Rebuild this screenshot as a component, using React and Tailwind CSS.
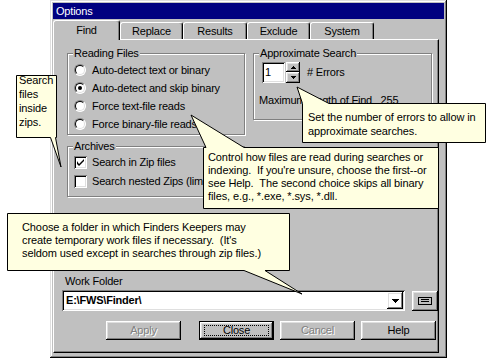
import React from 'react'

const raised = 'shadow-[inset_-1px_-1px_#000,inset_1px_1px_#fff,inset_-2px_-2px_#808080,inset_2px_2px_#dfdfdf]'
const sunken = 'shadow-[inset_1px_1px_#808080,inset_-1px_-1px_#fff,inset_2px_2px_#000,inset_-2px_-2px_#dfdfdf]'

const Radio = ({ checked, label }) => (
  <div className="flex items-center h-[18px] gap-[6px]">
    <span className="relative w-[12px] h-[12px] rounded-full bg-white border border-t-[#808080] border-l-[#808080] border-b-white border-r-white">
      <span className="absolute inset-0 rounded-full border border-t-black border-l-black border-b-[#dfdfdf] border-r-[#dfdfdf]" />
      {checked && <span className="absolute left-[3px] top-[3px] w-[4px] h-[4px] rounded-full bg-black" />}
    </span>
    <span>{label}</span>
  </div>
)

const Check = ({ checked, label, clip }) => (
  <div className="flex items-center h-[19px] gap-[5px]">
    <span className={`relative w-[13px] h-[13px] bg-white ${sunken}`}>
      {checked && (
        <svg className="absolute left-[3px] top-[3px]" width="7" height="7" viewBox="0 0 7 7">
          <path d="M0 2v3l2 2l5-5v-2l-5 5z" fill="#000" />
        </svg>
      )}
    </span>
    <span className={clip ? 'w-[112px] overflow-hidden whitespace-nowrap' : ''}>{label}</span>
  </div>
)

const Group = ({ label, className, children }) => (
  <div className={`relative border border-[#808080] shadow-[1px_1px_#fff,inset_1px_1px_#fff] ${className}`}>
    <span className="absolute -top-[8px] left-[5px] px-[1px] bg-[#c0c0c0] leading-[14px]">{label}</span>
    {children}
  </div>
)

const Tab = ({ label, active, w }) => (
  <div
    className={`relative flex items-center justify-center ${w} border-l border-t border-white rounded-tl-[3px] rounded-tr-[3px] border-r border-r-black shadow-[inset_-1px_0_#808080] ${
      active ? 'h-[20px] -mb-[1px] bg-[#c0c0c0] z-10' : 'h-[17px]'
    }`}
  >
    {label}
  </div>
)

const Btn = ({ label, disabled, def, className = '' }) => (
  <div className={`w-[75px] h-[19px] flex ${def ? 'border border-black' : ''} ${className}`}>
    <div className={`w-full h-full flex items-center justify-center ${raised}`}>
      {def ? (
        <span className="border border-dotted border-black w-[calc(100%-8px)] h-[calc(100%-6px)] flex items-center justify-center leading-[11px]">{label}</span>
      ) : (
        <span className={disabled ? 'text-[#808080] [text-shadow:1px_1px_#fff]' : ''}>{label}</span>
      )}
    </div>
  </div>
)

const Tip = ({ className, children }) => (
  <div className={`absolute text-black text-[11px] leading-[13px] tracking-[-0.1px] ${className}`}>{children}</div>
)

export default function App() {
  return (
    <div className="relative w-[498px] h-[359px] bg-white overflow-hidden font-['Liberation_Sans',Arial,sans-serif] text-[11px] tracking-[-0.2px] text-black">
      <div className="pl-[50px]">
        <div className="w-[397px] h-[358px] bg-[#c0c0c0] p-[3px] flex flex-col shadow-[inset_-1px_-1px_#000,inset_1px_1px_#dfdfdf,inset_-2px_-2px_#808080,inset_2px_2px_#fff]">
          <div className="h-[16px] bg-[#000080] text-white flex items-center pl-[3px]">Options</div>
          <div className="flex items-end h-[20px]">
            <Tab label="Find" active w="w-[67px]" />
            <Tab label="Replace" w="w-[63px]" />
            <Tab label="Results" w="w-[64px]" />
            <Tab label="Exclude" w="w-[63px]" />
            <Tab label="System" w="w-[64px]" />
          </div>
          <div className="relative flex-1 mr-[5px] mb-[2px] border-l border-t border-white border-r border-b border-r-black border-b-black shadow-[inset_-1px_-1px_#808080] pl-[13px] pt-[13px]">
            <div className="flex gap-[8px]">
              <div className="w-[178px] flex flex-col gap-[11px]">
                <Group label="Reading Files" className="h-[82px] pt-[7px] pl-[6px]">
                  <Radio label="Auto-detect text or binary" />
                  <Radio label="Auto-detect and skip binary" checked />
                  <Radio label="Force text-file reads" />
                  <Radio label="Force binary-file reads" />
                </Group>
                <Group label="Archives" className="h-[51px] pt-[6px] pl-[6px]">
                  <Check label="Search in Zip files" checked />
                  <Check label="Search nested Zips (limited)" clip />
                </Group>
              </div>
              <Group label="Approximate Search" className="w-[179px] h-[67px] pt-[8px] pl-[8px]">
                <div className="flex items-center gap-[7px]">
                  <div className="flex">
                    <div className={`w-[23px] h-[21px] bg-white ${sunken} pl-[3px] pt-[3px] leading-[14px]`}>1</div>
                    <div className="flex flex-col ml-[1px]">
                      <div className={`w-[14px] h-[10px] ${raised} flex items-center justify-center`}>
                        <svg width="5" height="3" viewBox="0 0 5 3"><path d="M2 0h1v1h1v1h1v1h-5v-1h1v-1h1z" fill="#000" /></svg>
                      </div>
                      <div className={`w-[14px] h-[11px] ${raised} flex items-center justify-center`}>
                        <svg width="5" height="3" viewBox="0 0 5 3"><path d="M0 0h5v1h-1v1h-1v1h-1v-1h-1v-1h-1z" fill="#000" /></svg>
                      </div>
                    </div>
                  </div>
                  <span># Errors</span>
                </div>
                <div className="mt-[9px] -ml-[3px]">Maximum length of Find&nbsp;&nbsp; 255</div>
              </Group>
            </div>
            <div className="mt-[77px] -ml-[2px] leading-[14px]">Work Folder</div>
            <div className="flex items-center mt-[2px] -ml-[5px] gap-[7px]">
              <div className={`w-[343px] h-[21px] bg-white ${sunken} flex items-center pl-[4px] pr-[2px]`}>
                <span className="flex-1 font-bold">E:\FWS\Finder\</span>
                <div className={`w-[16px] h-[17px] ${raised} flex items-center justify-center`}>
                  <svg width="7" height="4" viewBox="0 0 7 4"><path d="M0 0h7v1h-1v1h-1v1h-1v1h-1v-1h-1v-1h-1v-1h-1z" fill="#000" /></svg>
                </div>
              </div>
              <div className={`w-[26px] h-[20px] ${raised} flex items-center justify-center`}>
                <div className="w-[14px] h-[8px] border border-black bg-[#c0c0c0] flex flex-col justify-center gap-[1px] px-[2px]">
                  <div className="h-px bg-black" />
                  <div className="h-px bg-black" />
                </div>
              </div>
            </div>
            <div className="flex gap-[6px] mt-[10px] ml-[39px]">
              <Btn label="Apply" disabled className="mr-[12px]" />
              <Btn label="Close" def />
              <Btn label="Cancel" disabled />
              <Btn label="Help" />
            </div>
          </div>
        </div>
      </div>

      <svg className="absolute left-0 top-0" width="498" height="359" viewBox="0 0 498 359">
        <path d="M16.5 75.5H56.5V137.5H55.5L61 167L50.5 137.5H16.5Z" fill="#ffffe1" stroke="#000" />
        <path d="M302.5 103.5L297 87L329 103.5H485.5V142.5H302.5Z" fill="#ffffe1" stroke="#000" />
        <path d="M203.5 147.5H206L191 115L244 147.5H438.5V208.5H203.5Z" fill="#ffffe1" stroke="#000" />
        <path d="M7.5 213.5H289.5V270.5H265L302 294L244 270.5H7.5Z" fill="#ffffe1" stroke="#000" />
      </svg>
      <Tip className="left-[19px] top-[73px] leading-[14px]">
        Search<br />files<br />inside<br />zips.
      </Tip>
      <Tip className="left-[308px] top-[110px] leading-[14px]">
        Set the number of errors to allow in<br />approximate searches.
      </Tip>
      <Tip className="left-[208px] top-[151px] leading-[13.4px]">
        Control how files are read during searches or<br />
        indexing.&nbsp; If you're unsure, choose the first--or<br />
        see Help.&nbsp; The second choice skips all binary<br />
        files, e.g., *.exe, *.sys, *.dll.
      </Tip>
      <Tip className="left-[22px] top-[221px]">
        Choose a folder in which Finders Keepers may<br />
        create temporary work files if necessary.&nbsp; (It's<br />
        seldom used except in searches through zip files.)
      </Tip>
    </div>
  )
}
